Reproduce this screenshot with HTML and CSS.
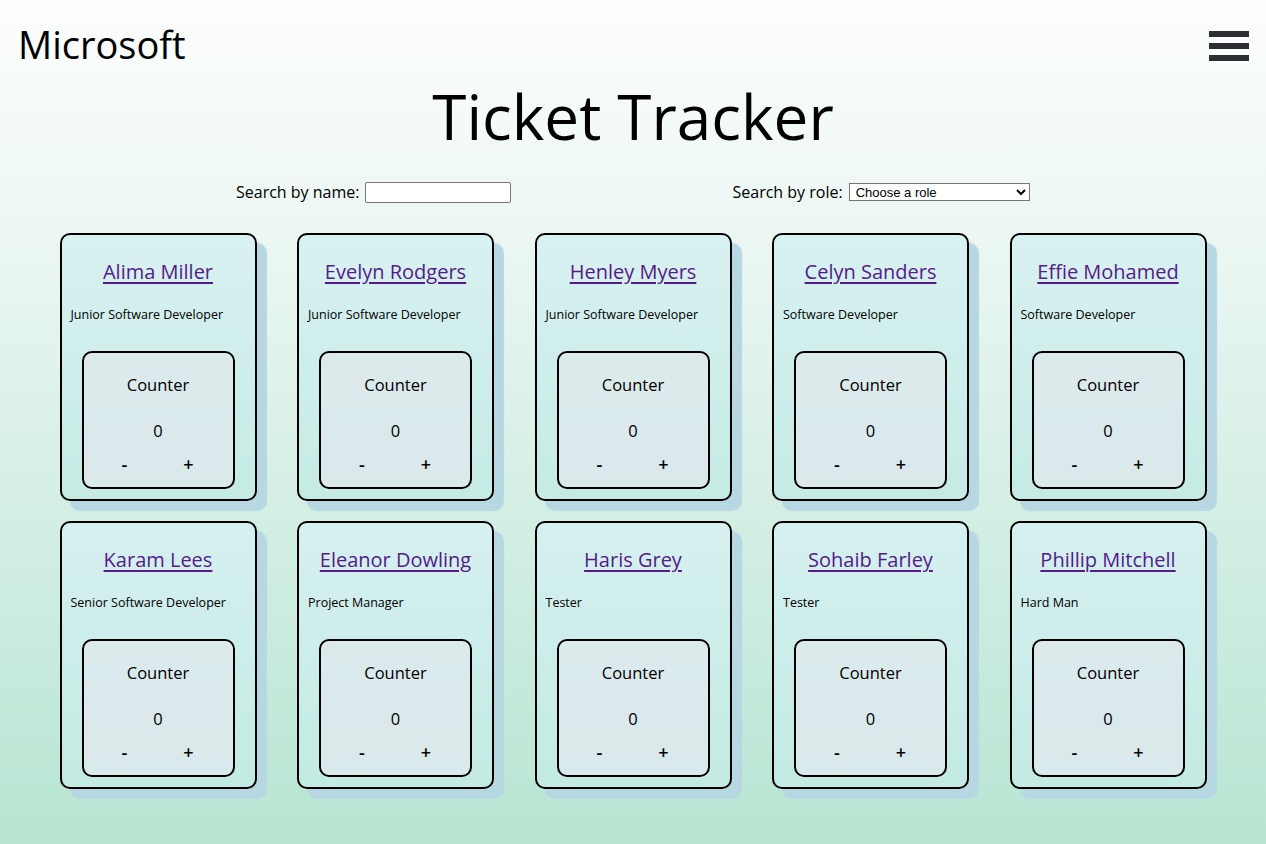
FILE: index.html
```html
<!DOCTYPE html>
<html lang="en">
<head>
<meta charset="utf-8">
<title>Ticket Tracker</title>
<link rel="stylesheet" href="styles.css">
</head>
<body>
<header class="topbar">
  <span class="brand">Microsoft</span>
  <button class="menu" aria-label="Menu"><span class="bar"></span><span class="bar"></span><span class="bar"></span></button>
</header>
<h1 class="title">Ticket Tracker</h1>
<div class="filters">
  <label class="filter filter-name">Search by name: <input class="text-input" type="text"></label>
  <label class="filter filter-role">Search by role: <select class="select"><option>Choose a role</option></select></label>
</div>
<main class="grid">
  <div class="card"><a class="name" href="#">Alima Miller</a><p class="role">Junior Software Developer</p><div class="counter"><p class="counter-label">Counter</p><p class="count">0</p><div class="buttons"><button class="btn">-</button><button class="btn">+</button></div></div></div>
  <div class="card"><a class="name" href="#">Evelyn Rodgers</a><p class="role">Junior Software Developer</p><div class="counter"><p class="counter-label">Counter</p><p class="count">0</p><div class="buttons"><button class="btn">-</button><button class="btn">+</button></div></div></div>
  <div class="card"><a class="name" href="#">Henley Myers</a><p class="role">Junior Software Developer</p><div class="counter"><p class="counter-label">Counter</p><p class="count">0</p><div class="buttons"><button class="btn">-</button><button class="btn">+</button></div></div></div>
  <div class="card"><a class="name" href="#">Celyn Sanders</a><p class="role">Software Developer</p><div class="counter"><p class="counter-label">Counter</p><p class="count">0</p><div class="buttons"><button class="btn">-</button><button class="btn">+</button></div></div></div>
  <div class="card"><a class="name" href="#">Effie Mohamed</a><p class="role">Software Developer</p><div class="counter"><p class="counter-label">Counter</p><p class="count">0</p><div class="buttons"><button class="btn">-</button><button class="btn">+</button></div></div></div>
  <div class="card"><a class="name" href="#">Karam Lees</a><p class="role">Senior Software Developer</p><div class="counter"><p class="counter-label">Counter</p><p class="count">0</p><div class="buttons"><button class="btn">-</button><button class="btn">+</button></div></div></div>
  <div class="card"><a class="name" href="#">Eleanor Dowling</a><p class="role">Project Manager</p><div class="counter"><p class="counter-label">Counter</p><p class="count">0</p><div class="buttons"><button class="btn">-</button><button class="btn">+</button></div></div></div>
  <div class="card"><a class="name" href="#">Haris Grey</a><p class="role">Tester</p><div class="counter"><p class="counter-label">Counter</p><p class="count">0</p><div class="buttons"><button class="btn">-</button><button class="btn">+</button></div></div></div>
  <div class="card"><a class="name" href="#">Sohaib Farley</a><p class="role">Tester</p><div class="counter"><p class="counter-label">Counter</p><p class="count">0</p><div class="buttons"><button class="btn">-</button><button class="btn">+</button></div></div></div>
  <div class="card"><a class="name" href="#">Phillip Mitchell</a><p class="role">Hard Man</p><div class="counter"><p class="counter-label">Counter</p><p class="count">0</p><div class="buttons"><button class="btn">-</button><button class="btn">+</button></div></div></div>
</main>
</body>
</html>
```

FILE: styles.css
```css
* { box-sizing: border-box; }
html, body { margin: 0; padding: 0; }
body {
  min-height: 844px;
  font-family: "Open Sans", "Noto Sans", sans-serif;
  color: #000;
  background: linear-gradient(to bottom, #fdfefe 0%, #eaf6f2 30%, #b7e5d2 100%);
}
.topbar {
  display: flex;
  justify-content: space-between;
  align-items: flex-start;
  padding: 20px 17px 0 18px;
  height: 72px;
}
.brand {
  font-size: 38px;
  line-height: 48px;
}
.menu {
  display: flex;
  flex-direction: column;
  gap: 6px;
  padding: 0;
  margin-top: 11px;
  border: 0;
  background: transparent;
}
.bar {
  display: block;
  width: 40px;
  height: 6px;
  background: #2d3033;
}
.title {
  margin: 6px 0 0;
  text-align: center;
  font-size: 62px;
  line-height: 76px;
  font-weight: 500;
}
.filters {
  display: flex;
  margin-top: 27px;
  height: 30px;
  font-size: 16px;
}
.filter { display: flex; align-items: center; gap: 6px; height: 22px; }
.filter-name { margin-left: 236px; }
.filter-role { margin-left: 221px; }
.text-input {
  width: 146px;
  height: 21px;
  border: 1px solid #767676;
  border-radius: 2px;
  background: #fff;
  padding: 1px 2px;
}
.select {
  width: 181px;
  height: 18px;
  font-family: "Liberation Sans", Arial, sans-serif;
  font-size: 13px;
  border: 1px solid #767676;
  background: #fff;
  padding: 0 2px;
}
.grid {
  display: grid;
  grid-template-columns: repeat(5, 197px);
  column-gap: 40.5px;
  row-gap: 20px;
  justify-content: center;
  margin-top: 22px;
}
.card {
  height: 268px;
  border: 2px solid #000;
  border-radius: 10px;
  background: linear-gradient(to bottom, rgba(214,241,241,0.9), rgba(195,234,228,0.9));
  box-shadow: 10px 10px 1px #b7d8e3;
  display: flex;
  flex-direction: column;
  align-items: center;
  padding-top: 24px;
}
.name {
  font-size: 20px;
  line-height: 26px;
  color: #551a8b;
  text-decoration: underline;
  text-underline-offset: 3px;
  text-decoration-thickness: 1.5px;
}
.role {
  align-self: flex-start;
  margin: 22px 0 0 9px;
  font-size: 12.5px;
  line-height: 16px;
}
.counter {
  margin-top: 28px;
  width: 153px;
  height: 138px;
  border: 2px solid #000;
  border-radius: 10px;
  background: rgba(222,233,236,0.85);
  display: flex;
  flex-direction: column;
  align-items: center;
  padding-top: 21px;
}
.counter-label { margin: 0; font-size: 16.5px; line-height: 22px; }
.count { margin: 24px 0 0; font-size: 16.5px; line-height: 22px; }
.buttons { display: flex; gap: 50px; margin-top: 11px; margin-left: -3px; }
.btn {
  border: 0;
  background: transparent;
  font-family: inherit;
  font-size: 18px;
  font-weight: 600;
  line-height: 22px;
  padding: 0;
  width: 14px;
  color: #000;
}
```
